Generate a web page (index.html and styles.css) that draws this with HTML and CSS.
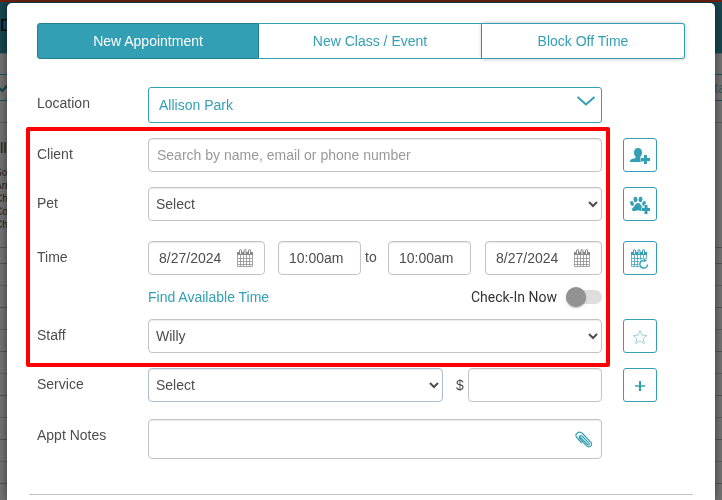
FILE: index.html
```html
<!DOCTYPE html>
<html lang="en">
<head>
    <meta charset="UTF-8">
    <meta name="viewport" content="width=device-width, initial-scale=1.0">
    <title>New Appointment</title>
    <link rel="stylesheet" href="styles.css">
</head>
<body>

    <!-- icons used more than once -->
    <svg class="sprite" aria-hidden="true">
        <symbol id="icon-calendar" viewBox="0 0 16 18">
            <path d="M.5 3.500h15v14H.5zM3.500 6v11M6.500 6v11M9.500 6v11M12.500 6v11M1 9.500h14M1 12.500h14M1 15.500h14" fill="#fff" stroke="currentColor" stroke-opacity=".75"/>
            <path d="M0 3h16v3H0z" fill="currentColor"/>
            <path d="M2.500 5V2q0-1.500 1-1.500T4.500 2v3M7 5V2q0-1.500 1-1.500T9 2v3M11.500 5V2q0-1.500 1-1.500T13.500 2v3" fill="#fff" stroke="currentColor"/>
        </symbol>
    </svg>

    <div class="page" aria-hidden="true">
        <div class="page-header">D</div>
        <div class="page-bar"></div>
        <div class="page-filter">
            <svg width="7" height="10" viewBox="0 0 7 10"><path d="M0 5l2 3 6-6" fill="none" stroke="#17454e" stroke-width="2"/></svg>
            <span>ta</span>
        </div>
        <div class="page-bar"></div>
        <div class="page-staff">
            <p class="page-name">lly</p>
            <p>So</p>
            <p>Arr</p>
            <p>Ch</p>
            <p>Co</p>
            <p>Ch</p>
        </div>
        <div class="page-slots"></div>
    </div>

    <form class="modal">

        <div class="tabs">
            <button class="tab active" type="button">New Appointment</button>
            <button class="tab" type="button">New Class / Event</button>
            <button class="tab raised" type="button">Block Off Time</button>
        </div>

        <div class="row location-row">
            <label for="location">Location</label>
            <button class="location" id="location" type="button">
                Allison Park
                <svg width="20" height="12" viewBox="0 0 20 12"><path d="M1.500 2l8.500 7.500L18.500 2" fill="none" stroke="currentColor" stroke-width="2"/></svg>
            </button>
        </div>

        <div class="highlight">
            <div class="row client-row">
                <label for="client">Client</label>
                <input class="field" id="client" type="text" placeholder="Search by name, email or phone number">
                <button class="icon-button" type="button" aria-label="Add client">
                    <svg width="20" height="16" viewBox="0 0 20 16" fill="currentColor">
                        <path d="M8 0c2.600 0 4 1.500 4 4.500 0 2-.6 3.200-1.500 4V10l2.500 1.500V14H0c0-2 .5-2.500 2-3l3.500-1V8.500C4.600 7.700 4 6.500 4 4.500 4 1.500 5.400 0 8 0z"/>
                        <path d="M13.500 6.500h4v3h3v4h-3v3h-4v-3h-3v-4h3z" fill="#fff"/>
                        <path d="M14 7h3v3h3v3h-3v3h-3v-3h-3v-3h3z"/>
                    </svg>
                </button>
            </div>

            <div class="row pet-row">
                <label for="pet">Pet</label>
                <select class="field" id="pet"><option>Select</option></select>
                <button class="icon-button" type="button" aria-label="Add pet">
                    <svg width="20" height="18" viewBox="0 0 20 18" fill="currentColor">
                        <ellipse cx="5.500" cy="3.500" rx="2" ry="2.700" transform="rotate(-12 5.500 3.500)"/>
                        <ellipse cx="10.500" cy="3.500" rx="2" ry="2.700" transform="rotate(12 10.500 3.500)"/>
                        <ellipse cx="2" cy="7.500" rx="1.800" ry="2.400" transform="rotate(-20 2 7.500)"/>
                        <ellipse cx="14" cy="7.500" rx="1.800" ry="2.400" transform="rotate(20 14 7.500)"/>
                        <path d="M8 7c2 0 2.600 1.500 3.600 3 1 1.300 2.400 2 2.400 3.500 0 1.200-1 1.500-2 1.500-1.500 0-2.500-.8-4-.8s-2.500.8-4 .8c-1 0-2-.3-2-1.500C2 12 3.400 11.300 4.400 10 5.400 8.500 6 7 8 7z"/>
                        <path d="M14 8.500h4v3h3v4h-3v3h-4v-3h-3v-4h3z" fill="#fff"/>
                        <path d="M14.500 9h3v3h3v3h-3v3h-3v-3h-3v-3h3z"/>
                    </svg>
                </button>
            </div>

            <div class="row time-row">
                <label for="start-date">Time</label>
                <div class="times">
                    <div class="date">
                        <input class="field" id="start-date" type="text" value="8/27/2024">
                        <svg class="date-icon"><use href="#icon-calendar"/></svg>
                    </div>
                    <input class="field" type="text" value="10:00am" aria-label="Start time">
                    <span class="to">to</span>
                    <input class="field" type="text" value="10:00am" aria-label="End time">
                    <div class="date">
                        <input class="field" type="text" value="8/27/2024" aria-label="End date">
                        <svg class="date-icon"><use href="#icon-calendar"/></svg>
                    </div>
                </div>
                <button class="icon-button" type="button" aria-label="Repeat">
                    <svg width="18" height="20" viewBox="0 0 18 20">
                        <svg width="16" height="18"><use href="#icon-calendar"/></svg>
                        <circle cx="13" cy="15" r="5.500" fill="#fff"/>
                        <path d="M12 11.500a3.800 3.800 0 1 0 4.500 4" fill="none" stroke="currentColor" stroke-width="1.400"/>
                        <path d="M12.500 9.500v4l3.500-2z" fill="currentColor"/>
                    </svg>
                </button>
            </div>

            <div class="row options-row">
                <div class="options">
                    <a href="#">Find Available Time</a>
                    <label class="check-in">Check-In Now <input class="switch" type="checkbox"></label>
                </div>
            </div>

            <div class="row">
                <label for="staff">Staff</label>
                <select class="field" id="staff"><option>Willy</option></select>
                <button class="icon-button" type="button" aria-label="Favorite">
                    <svg width="16" height="16" viewBox="0 0 16 16"><path d="M8 1.500l1.900 4.600 4.900.4-3.700 3.200 1.200 4.800L8 11.900l-4.300 2.600 1.200-4.800L1.200 6.500l4.900-.4z" fill="#fff" stroke="#9fcfd8"/></svg>
                </button>
            </div>
        </div>

        <div class="row service-row">
            <label for="service">Service</label>
            <div class="service">
                <select class="field service-select" id="service"><option>Select</option></select>
                <label class="currency" for="price">$</label>
                <input class="field" id="price" type="text">
            </div>
            <button class="icon-button" type="button" aria-label="Add service">
                <svg width="10" height="10" viewBox="0 0 10 10"><path d="M0 5h10" stroke="#68bac9" stroke-width="2"/><path d="M5 0v10" stroke="currentColor" stroke-width="2"/></svg>
            </button>
        </div>

        <div class="row notes-row">
            <label for="notes">Appt Notes</label>
            <div class="notes">
                <textarea class="field" id="notes" rows="1"></textarea>
                <svg class="clip" viewBox="0 0 18 18"><path d="M5 6l7.500 7.500c1.200 1.200 2.500-.2 1.400-1.400L7.500 5.500C5.500 3.500 3 5.500 4.800 7.600l6.500 7c3 3 7-.5 4.500-3.500L7.500 2.500C4-.7-.8 2.800 1.700 6.500l5 5.500" fill="none" stroke="currentColor" stroke-width="1.200"/></svg>
            </div>
        </div>

        <hr>
    </form>

</body>
</html>
```
FILE: styles.css
```css
* {
    box-sizing: border-box;
}
html, body {
    height: 100%;
}
body {
    margin: 0;
    overflow: hidden;
    font-family: "Liberation Sans", Arial, sans-serif;
    font-size: 14px;
    line-height: 16px;
    color: #4d4d4d;
}
button, input, select, textarea {
    margin: 0;
    font: inherit;
    color: inherit;
}
svg {
    display: block;
}
.sprite {
    display: none;
}

/* dimmed calendar behind the modal */
.page {
    position: fixed;
    inset: 0;
    overflow: hidden;
    background-color: #727272;
    color: #222;
}
.page-header {
    height: 54px;
    padding-top: 16px;
    border-top: 2px solid #71200f;
    border-bottom: 1px solid #4f6063;
    background-color: #17464f;
    color: #000;
    font-size: 16px;
}
.page-bar {
    height: 20px;
}
.page-filter {
    display: flex;
    justify-content: space-between;
    align-items: center;
    height: 27px;
    margin-right: -4px;
    border-top: 1px solid #17555f;
    border-bottom: 1px solid #17555f;
    color: #3f575b;
}
.page-filter + .page-bar {
    height: 22px;
    border-bottom: 1px solid #5b5b5b;
}
.page-staff {
    height: 125px;
    margin-left: -5px;
    padding-top: 17px;
    border-bottom: 1px solid #555;
    font-size: 10px;
    line-height: 13px;
}
.page-staff p {
    margin: 0;
}
.page-staff .page-name {
    margin: 0 0 10px 5px;
    font-size: 15px;
    line-height: 16px;
}
.page-slots {
    height: 100%;
    margin-top: 15px;
    background-image:
        repeating-linear-gradient(#545454 0 1px, transparent 1px 44px),
        repeating-linear-gradient(transparent 0 22px, #5e5e5e 22px 23px, transparent 23px 44px);
}

.modal {
    position: relative;
    min-height: calc(100% - 3px);
    margin: 3px 7px 0;
    padding: 20px 30px 0;
    border-radius: 5px 5px 0 0;
    background-color: #fff;
    box-shadow: 0 0 8px rgba(0, 0, 0, 0.5);
}
.tabs {
    display: grid;
    grid-template-columns: 222fr 223fr 203fr;
    margin-bottom: 28px;
}
.tab {
    height: 36px;
    padding: 0;
    border: 1px solid #339fb4;
    border-left-width: 0;
    background-color: #fff;
    color: #339fb4;
}
.tab.active {
    border-color: #24808f;
    border-left-width: 1px;
    border-radius: 3px 0 0 3px;
    background-color: #339fb4;
    color: #fff;
}
.tab.raised {
    border-radius: 0 3px 3px 0;
    box-shadow: 0 0 4px rgba(0, 0, 0, 0.25);
}

.row {
    display: grid;
    grid-template-columns: 111px 1fr 34px;
    margin-right: 28px;
}
.row > label {
    padding-top: 8px;
}
.row > :nth-child(2) {
    margin-right: 21px;
}
.location-row {
    margin-bottom: 15px;
}
.location {
    display: flex;
    justify-content: space-between;
    height: 36px;
    padding: 9px 5px 0 10px;
    border: 1px solid #339fb4;
    border-radius: 3px;
    background-color: #fff;
    color: #339fb4;
}
.location svg {
    margin-top: -2px;
}
.field {
    width: 100%;
    min-width: 0;
    height: 34px;
    padding: 0 8px;
    border: 1px solid #c4c4c4;
    border-radius: 4px;
    background-color: #fff;
    box-shadow: inset 0 1px 1px rgba(0, 0, 0, 0.08);
}
.field::placeholder {
    color: #999;
}
select.field {
    padding: 0 0 0 3px;
}
.row > .field {
    width: auto;
}
.icon-button {
    display: flex;
    align-items: center;
    justify-content: center;
    width: 34px;
    height: 34px;
    padding: 2px 0 0;
    border: 1px solid #339fb4;
    border-radius: 3px;
    background-color: #fff;
    color: #339fb4;
}

/* red frame round the main fields */
.highlight {
    position: relative;
}
.highlight::after {
    content: "";
    position: absolute;
    inset: -11px 75px -14px -11px;
    border: 4px solid #f00;
    border-radius: 2px;
    pointer-events: none;
}
.client-row {
    margin-bottom: 15px;
}
.pet-row {
    margin-bottom: 20px;
}
.times {
    display: grid;
    grid-template-columns: 117fr 13px 83fr 27px 83fr 14px 117fr;
}
.times > :nth-child(2) {
    grid-column: 3;
}
.times > :last-child {
    grid-column: 7;
}
.date {
    position: relative;
}
.times .field {
    padding: 0 10px;
}
.date-icon {
    position: absolute;
    top: 8px;
    right: 12px;
    width: 16px;
    height: 18px;
    color: #888;
}
.to {
    padding: 8px 0 0 4px;
}
.options-row {
    padding: 11px 0;
}
.options {
    grid-column: 2;
    display: flex;
    justify-content: space-between;
    align-items: center;
    margin-right: 21px;
}
.options a {
    color: #339fb4;
    text-decoration: none;
}
.check-in {
    display: flex;
    align-items: center;
    gap: 9px;
    height: 22px;
    color: #333;
    font-family: Roboto, sans-serif;
}
.switch {
    appearance: none;
    display: flex;
    align-items: center;
    width: 36px;
    height: 14px;
    border-radius: 7px;
    background-color: #dedede;
}
.switch::before {
    content: "";
    width: 20px;
    height: 20px;
    border-radius: 50%;
    background-color: #929292;
    box-shadow: 0 1px 2px rgba(0, 0, 0, 0.3);
}

.service-row {
    margin-top: 15px;
    margin-bottom: 17px;
}
.service {
    display: grid;
    grid-template-columns: 295fr 25px 134fr;
}
.service-select {
    border-color: #a9bed0;
}
.currency {
    padding-top: 9px;
    padding-left: 9px;
    text-align: center;
}
.notes {
    position: relative;
}
.notes .field {
    display: block;
    height: 40px;
    padding: 10px 36px 10px 8px;
    resize: none;
    overflow: hidden;
}
.clip {
    position: absolute;
    top: 12px;
    right: 9px;
    width: 18px;
    height: 18px;
    color: #339fb4;
}
hr {
    margin: 35px -8px 0;
    border: 0;
    border-top: 1px solid #c4c4c4;
}
```
